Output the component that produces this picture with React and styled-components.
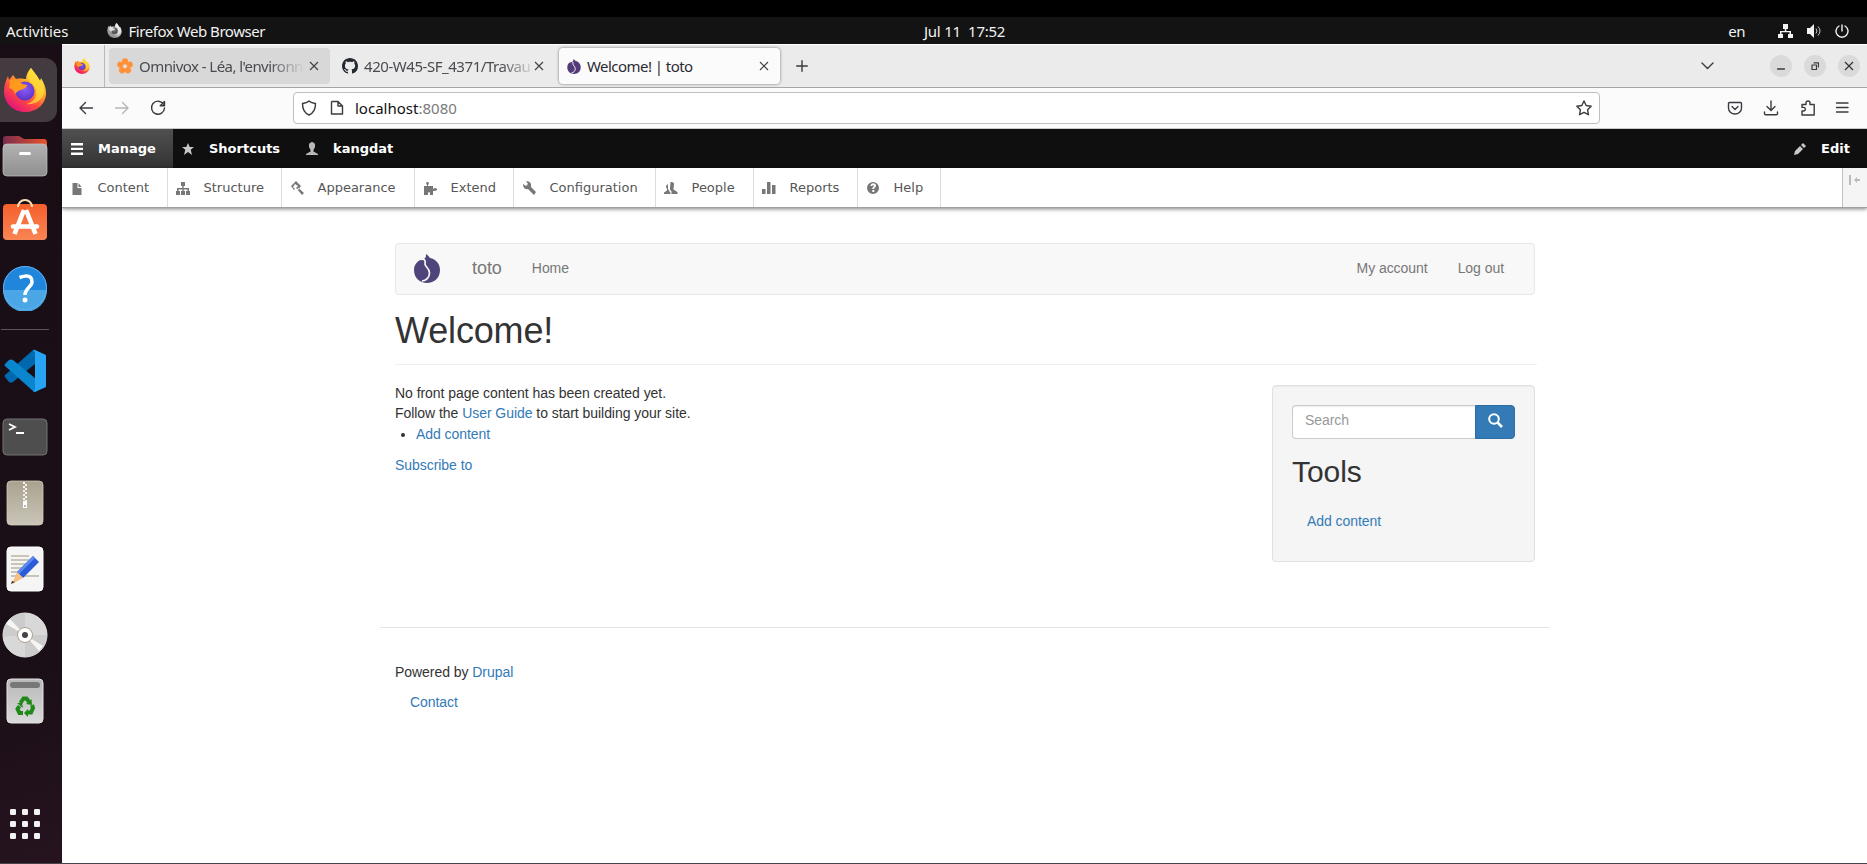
import React from "react";
import styled, { createGlobalStyle } from "styled-components";

const Global = createGlobalStyle`
  *{box-sizing:border-box}
  html,body{margin:0;padding:0;background:#000}
  body{width:1867px;height:864px;overflow:hidden;font-family:"Liberation Sans",Arial,sans-serif}
  svg{display:block;flex:none}
`;
const ui = `"Noto Sans","Open Sans",sans-serif`;

const Screen = styled.div`
  width:1867px;height:864px;display:flex;flex-direction:column;background:#fff;overflow:hidden;
  border-top:17px solid #000;border-bottom:1px solid #45454d;
`;
const TopBar = styled.header`
  height:27px;flex:none;background:#131313;color:#f2f2f2;display:grid;
  grid-template-columns:918px auto 1fr;align-items:center;padding:0 18px 0 6px;
`;
const TopGroup = styled.div`
  display:flex;align-items:center;justify-content:${p => (p.$end ? "flex-end" : "flex-start")};
`;
const Label = styled.span`
  font-family:${ui};font-size:${p => p.$size || 15}px;letter-spacing:${p => p.$ls || 0}px;
  line-height:20px;white-space:pre;margin-left:${p => p.$ml || 0}px;color:${p => p.$color || "inherit"};
`;
const Gap = styled.span`flex:none;width:${p => p.$w}px;`;
const Spacer = styled.span`flex:1;`;
const Desktop = styled.div`flex:1;display:flex;min-height:0;`;
const Dock = styled.aside`
  width:62px;flex:none;background:linear-gradient(160deg,#190e15 0%,#1a0f17 75%,#26131f 100%);
  display:flex;flex-direction:column;align-items:flex-start;padding-top:14px;
`;
const DockItem = styled.div`
  width:57px;height:${p => p.$h || 66}px;flex:none;display:flex;align-items:center;padding-left:${p => p.$pl ?? 2}px;
  margin-top:${p => p.$mt || 0}px;
  border-radius:0 12px 12px 0;background:${p => (p.$active ? "#443b41" : "transparent")};
`;
const DockLine = styled.div`width:48px;height:1px;background:#5b5358;margin:3px 0 8px 1px;flex:none;`;
const Browser = styled.section`flex:1;display:flex;flex-direction:column;min-width:0;background:#fff;`;
const TabStrip = styled.div`
  height:44px;flex:none;background:#ebebeb;border-top:1px solid #fff;border-bottom:1px solid #a5a5a7;
  display:flex;align-items:center;padding-right:7px;
`;
const Pinned = styled.div`
  width:43px;flex:none;height:100%;border-right:1px solid #b8b8b8;display:flex;align-items:center;padding-left:12px;margin-right:4px;
`;
const Tab = styled.div`
  width:221px;flex:none;height:36px;border-radius:4px;display:flex;align-items:center;padding:0 11px 0 8px;margin-right:4px;
  background:${p => (p.$kind === "active" ? "#fbfbfb" : p.$kind === "hover" ? "#d8d8d8" : "transparent")};
  box-shadow:${p => (p.$kind === "active" ? "0 0 3px rgba(0,0,0,.5)" : "none")};
  color:${p => (p.$kind === "active" ? "#2b2a33" : "#4a4a4f")};
`;
const TabTitle = styled.div`
  flex:1;min-width:0;margin:0 0 0 6px;font-family:${ui};font-size:15px;
  letter-spacing:${p => p.$ls || 0}px;line-height:20px;white-space:nowrap;
  ${p => p.$fade && `mask-image:linear-gradient(90deg,#000 ${p.$fade - 32}px,transparent ${p.$fade + 3}px);`}
`;
const WindowButtons = styled.div`display:flex;gap:12px;`;
const WindowButton = styled.span`
  width:22px;height:22px;border-radius:50%;background:#dadada;display:flex;align-items:center;justify-content:center;
`;
const NavBar = styled.div`
  height:41px;flex:none;background:#fbfbfb;border-bottom:1px solid #cacaca;display:flex;align-items:center;padding-left:16px;
`;
const UrlBar = styled.div`
  width:1307px;flex:none;height:32px;border:1px solid #bfbfc2;border-radius:4px;background:#fff;display:flex;align-items:center;
  padding:0 7px;margin-left:127px;
`;
const AdminBar = styled.nav`
  height:39px;flex:none;background:#0f0f0f;color:#fff;display:flex;font:bold 13px/38px "DejaVu Sans",sans-serif;
`;
const AdminTab = styled.div`
  display:flex;align-items:center;padding-left:${p => p.$pl || 9}px;width:${p => p.$w}px;
  background:${p => (p.$on ? "linear-gradient(#505050,#333)" : "transparent")};
  svg{margin-right:15px}
`;
const Tray = styled.nav`
  height:40px;flex:none;display:flex;border-bottom:1px solid #a0a0a0;box-shadow:0 1px 4px rgba(0,0,0,.5);background:#fff;
  font:13px/38px "DejaVu Sans",sans-serif;color:#565656;
`;
const TrayItem = styled.div`
  width:${p => p.$w}px;border-right:1px solid #ddd;display:flex;align-items:center;padding-left:8px;
  svg{margin-right:13.5px}
`;
const TrayToggle = styled.div`
  width:25px;margin-left:auto;background:#f5f5f5;border-left:1px solid #c2c2c2;padding:7px 0 0 6px;
`;
const Page = styled.main`width:1170px;margin:35px 0 0 318px;color:#333;font-size:14px;line-height:20px;letter-spacing:-.05px;`;
const SiteNav = styled.div`
  height:52px;margin:0 15px;background:#f8f8f8;border:1px solid #e7e7e7;border-radius:4px;display:flex;align-items:center;
  padding:0 30px 2px 18px;color:#777;
`;
const Brand = styled.span`font-size:18px;margin:0 30px 0 32px;`;
const NavLinks = styled.div`display:flex;gap:30px;margin-left:auto;`;
const Title = styled.h1`
  margin:16px 13px 20px 15px;height:54px;border-bottom:1px solid #eee;font-size:36px;font-weight:400;line-height:40px;letter-spacing:-.15px;
`;
const Columns = styled.div`display:flex;justify-content:space-between;padding:0 15px;height:242px;`;
const Body = styled.div`margin-top:-2px;`;
const Link = styled.a`color:#337ab7;`;
const List = styled.ul`margin:0 0 10px;padding-left:21px;line-height:22px;`;
const Line = styled.p`margin:0;`;
const Well = styled.aside`
  width:263px;height:177px;background:#f5f5f5;border:1px solid #e1e1e1;border-radius:4px;padding:19px;
  box-shadow:inset 0 1px 1px rgba(0,0,0,.05);
`;
const SearchRow = styled.div`display:flex;height:34px;`;
const SearchField = styled.div`
  flex:1;border:1px solid #ccc;border-right:0;border-radius:4px 0 0 4px;background:#fff;color:#999;padding:4px 12px;
  box-shadow:inset 0 1px 1px rgba(0,0,0,.075);
`;
const SearchButton = styled.div`
  width:40px;background:#337ab7;border:1px solid #2e6da4;border-radius:0 4px 4px 0;display:flex;justify-content:center;padding-top:7px;
`;
const ToolsTitle = styled.h2`margin:16px 0 23px;font-size:30px;font-weight:400;line-height:33px;`;
const Indent = styled.div`padding-left:15px;`;
const Footer = styled.footer`border-top:1px solid #e5e5e5;padding:34px 15px 0;`;
const FooterLink = styled.div`padding:10px 15px;`;

function Firefox({ size, gray, id }) {
  return (
    <svg width={size} height={size} viewBox="0 0 44 44">
      <defs>
        <linearGradient id={id + "a"} x1=".85" y1=".1" x2=".25" y2=".95">
          <stop offset="0" stopColor={gray ? "#eee" : "#fff44f"} /><stop offset=".35" stopColor={gray ? "#ccc" : "#ffa726"} />
          <stop offset=".65" stopColor={gray ? "#aaa" : "#ff4a40"} /><stop offset="1" stopColor={gray ? "#888" : "#e3157a"} />
        </linearGradient>
        <radialGradient id={id + "b"} cx=".5" cy=".4" r=".6">
          <stop offset="0" stopColor={gray ? "#777" : "#8a5cf6"} /><stop offset="1" stopColor={gray ? "#444" : "#5b35c5"} />
        </radialGradient>
      </defs>
      <path fill={`url(#${id}a)`} d="M28 0c2 3 4 5 6 8 1 2 2 3 3 5l1-3c3 5 5 10 5 15 0 11-9 19-21 19S1 35 1 23C1 17 3 12 5 8l1 4 4-5 3 4c4-1 8 0 10 0 0-4 2-8 5-11z" />
      <circle cx="22" cy="23" r="9.500" fill={`url(#${id}b)`} />
      <path fill={gray ? "#ddd" : "#ff9a1f"} d="M7 12c5-2 10 1 12 4l5 1c0 3-4 4-6 5-2 0-4 2-6 4-1-4-3-5-6-6 1-3 1-5 1-8z" />
      <path fill={gray ? "#eee" : "#ffdc3a"} d="M28 0c-4 5-4 10-1 14 4 3 7 7 6 13-1 5-5 8-10 9 9 1 17-4 18-12 0-8-4-11-7-16-2-3-4-5-6-8z" opacity=".75" />
    </svg>
  );
}
const Files = () => (
  <svg width="46" height="42" viewBox="0 0 46 42">
    <defs><linearGradient id="fo"><stop offset="0" stopColor="#7a2d4f" /><stop offset="1" stopColor="#e9542a" /></linearGradient>
      <linearGradient id="fg" x2="0" y2="1"><stop offset="0" stopColor="#b2b2b2" /><stop offset="1" stopColor="#8f8f8f" /></linearGradient></defs>
    <path fill="url(#fo)" d="M1 16V4q0-3 3-3h13l5 3h20q3 0 3 4v8z" />
    <rect x="1" y="9" width="44" height="32" rx="4" fill="url(#fg)" stroke="#c5c5c5" strokeWidth=".7" />
    <rect x="17" y="17" width="12" height="3" rx="1.500" fill="#fff" />
  </svg>
);
const Software = () => (
  <svg width="46" height="44" viewBox="0 0 46 44">
    <defs><linearGradient id="so" x2="0" y2="1"><stop offset="0" stopColor="#f4602b" /><stop offset="1" stopColor="#f98555" /></linearGradient></defs>
    <rect x="1" y="6" width="44" height="36" rx="4" fill="url(#so)" />
    <path d="M16 9a7 7 0 0 1 14 0" fill="none" stroke="#fbe2b5" strokeWidth="2" />
    <path d="M22 12 12.500 36M24 12l9.500 24" stroke="#fff" strokeWidth="4.600" />
    <path d="M11 28.500h24" stroke="#fff" strokeWidth="4.500" strokeLinecap="round" />
  </svg>
);
const Help = () => (
  <svg width="46" height="46" viewBox="0 0 46 46">
    <circle cx="23" cy="23" r="22" fill="#1f86dc" /><path d="M1 25a22 22 0 0 0 44 0z" fill="#4aa6e4" />
    <circle cx="23" cy="23" r="21.500" fill="none" stroke="#5fb1ef" />
    <path d="M17.500 12.500Q30 8 30 17c0 5-7 6-7 13" fill="none" stroke="#fff" strokeWidth="3.500" /><circle cx="23" cy="35" r="2.500" fill="#fff" />
  </svg>
);
const Code = () => (
  <svg width="44" height="44" viewBox="0 0 44 44">
    <path d="m2 28 4 5q2 1 4 0L33 14V1q-2-1-3 0L2 26q-1 1 0 2z" fill="#0069ad" />
    <path d="m2 15 4-4q2-1 4 0l23 19v12q-2 1-3 0L2 17q-1-1 0-2z" fill="#0a86cf" />
    <path d="M32 1 43 6v32L32 43q-1 0-2-1 2 0 2-2V4q0-2-2-2z" fill="#27a5f2" />
  </svg>
);
const Terminal = () => (
  <svg width="46" height="38" viewBox="0 0 46 38">
    <rect x="1" y="1" width="44" height="36" rx="4" fill="#4e4e4e" stroke="#727272" />
    <path d="m7 6 6 3-6 3M14 15h8" stroke="#fff" strokeWidth="1.800" fill="none" />
  </svg>
);
const Archive = () => (
  <svg width="38" height="46" viewBox="0 0 38 46">
    <defs><linearGradient id="ar" x2="0" y2="1"><stop offset="0" stopColor="#aaa28f" /><stop offset="1" stopColor="#c9c5b7" /></linearGradient></defs>
    <rect x="1" y="1" width="36" height="44" rx="4" fill="url(#ar)" stroke="#cfcbbf" strokeWidth=".8" />
    <path d="M18 2v20" stroke="#f5f3ed" strokeWidth="2" strokeDasharray="2 2" /><path d="M20 4v18" stroke="#f5f3ed" strokeWidth="2" strokeDasharray="2 2" />
    <path fill="#fff" fillRule="evenodd" d="M17 21h4v7h-4zM18 25v2h2v-2z" />
  </svg>
);
const Editor = () => (
  <svg width="38" height="46" viewBox="0 0 38 46">
    <rect x="1" y="1" width="36" height="44" rx="4" fill="#f5f5f5" stroke="#fff" />
    <path d="M5 10h18M5 14h18M5 18h17M5 22h13M5 26h8M5 30h28" stroke="#c8c4b7" strokeWidth="2" />
    <path d="m27 10 6 6-16 16-6-6z" fill="#2b5bd8" /><path d="m27 10 2 2-16 16-2-2z" fill="#5b8af0" /><path d="m11 26 6 6-11 6z" fill="#f6be83" /><path d="m6 35 3 1-4 2z" fill="#333" />
  </svg>
);
const Disc = () => (
  <svg width="46" height="46" viewBox="0 0 46 46">
    <circle cx="23" cy="23" r="22" fill="#ccc" stroke="#ddd" /><path d="M23 23V1a22 22 0 0 1 22 22zM23 23v22A22 22 0 0 1 1 25z" fill="#d8d8d8" />
    <path d="M23 23 4 12l4-5zM23 23l18 11-4 5z" fill="#f6f6f4" />
    <circle cx="23" cy="23" r="7.500" fill="#fff" stroke="#aaa08a" /><circle cx="23" cy="23" r="3" fill="#444" />
  </svg>
);
const Trash = () => (
  <svg width="38" height="46" viewBox="0 0 38 46">
    <defs><linearGradient id="tr" x2="0" y2="1"><stop offset="0" stopColor="#b8b8b8" /><stop offset="1" stopColor="#dadada" /></linearGradient></defs>
    <rect x="1" y="1" width="36" height="44" rx="4" fill="url(#tr)" stroke="#e4e4e4" /><rect x="4" y="4" width="30" height="6" rx="3" fill="#777" />
    <g fill="none" stroke="#20891a" strokeWidth="4">
      <path d="m14.500 25 3-4.500h3l3 4" /><path d="m26 27 1 3-2 4.500h-4" /><path d="M17 35h-3.500l-2-4 2-3" />
    </g>
    <path fill="#20891a" d="m25.500 21 .500 6-6-1zM22 31v8l-4-4zM11 25l5 0 1 5z" />
  </svg>
);
const AppsGrid = () => (
  <svg width="30" height="30" viewBox="0 0 30 30" fill="#f2f2f2">
    {[0, 12, 24].map(y => [0, 12, 24].map(x => <rect key={x + "-" + y} x={x} y={y} width="6" height="6" rx="1.300" />))}
  </svg>
);
const Flower = () => (
  <svg width="16" height="16" viewBox="0 0 16 16"><g fill="#ff9238">
    {[0, 72, 144, 216, 288].map(a => <circle key={a} cx="8" cy="3.300" r="3.100" transform={`rotate(${a} 8 8.300)`} />)}<circle cx="8" cy="8.300" r="4" />
  </g><circle cx="8" cy="8.300" r="2.100" fill="#e4dcd6" /></svg>
);
const Github = () => (
  <svg width="16" height="16" viewBox="0 0 16 16"><path fill="#24292f" d="M8 0C3.580 0 0 3.580 0 8c0 3.540 2.290 6.530 5.470 7.590.4.070.55-.17.55-.38 0-.19-.01-.82-.01-1.490-2.010.37-2.530-.49-2.690-.94-.09-.23-.48-.94-.82-1.130-.28-.15-.68-.52-.01-.53.63-.01 1.080.58 1.230.82.72 1.210 1.870.87 2.330.66.07-.52.28-.87.51-1.070-1.780-.2-3.640-.89-3.640-3.950 0-.87.31-1.590.82-2.150-.08-.2-.36-1.020.08-2.120 0 0 .67-.21 2.200.82.64-.18 1.320-.27 2-.27s1.360.09 2 .27c1.530-1.040 2.200-.82 2.200-.82.44 1.100.16 1.920.08 2.120.51.56.82 1.270.82 2.150 0 3.070-1.870 3.750-3.650 3.950.29.25.54.73.54 1.480 0 1.070-.01 1.930-.01 2.200 0 .21.15.46.55.38A8.010 8.010 0 0 0 16 8c0-4.420-3.580-8-8-8z" /></svg>
);
const Fig = ({ w, h, color, line }) => (
  <svg width={w} height={h} viewBox="0 0 26 29">
    <path fill={color} d="M10 5c2-1 2-3 2-5 2 1 3 3 4 4 6 1 10 6 10 12 0 8-6 13-13 13S0 24 0 16C0 10 4 6 10 5z" />
    <path fill="none" stroke={line} strokeWidth="1.700" d="M6.500 5.300c3.500-.8 5.500 1 4.500 4.200-.8 3 4.500 4 4.500 9.500 0 4-3 7.500-7.500 8" />
  </svg>
);
const Cross = ({ c = "#444", s = 10 }) => <svg width={s} height={s} viewBox="0 0 10 10"><path d="m1 1 8 8M9 1 1 9" stroke={c} strokeWidth="1.200" /></svg>;
const Stroke = ({ d, w = 16, h = 16, c = "#3a3a40", sw = 1.4, fill = "none" }) => (
  <svg width={w} height={h} viewBox={`0 0 ${w} ${h}`}><path d={d} fill={fill} stroke={c} strokeWidth={sw} strokeLinecap="round" strokeLinejoin="round" /></svg>
);
const Solid = ({ d, c = "#777", w = 14, h = 14 }) => <svg width={w} height={h} viewBox={`0 0 ${w} ${h}`}><path d={d} fill={c} fillRule="evenodd" /></svg>;

const trayItems = [
  ["Content", 106, "M2.500 2h5v5h4v7h-9zM8.500 2l3 4h-3z"],
  ["Structure", 114, "M5 1h4v4H7.700v2H13v3h1v4h-4v-4h1.500V8.500H7.700V10H9v4H5v-4h1.300V8.500H2.500V10H4v4H0v-4h1V7h5.300V5H5z"],
  ["Appearance", 133, "M1 5 6 0l5 5-3 4-2-2 2-2-3-2-2 3 2 2-1 1zM8.500 7l5.500 5-2 2-5-6z"],
  ["Extend", 99, "M1 5h3V4Q2 1 4.500 1T5 4v1h5v3q3-2 4 0t-4 2v4H7v-2Q6 10 5 12v2H1z"],
  ["Configuration", 142, "M1 3l3 2 2-2-2-3q6 0 5 6l5 5-2 3-6-6Q1 9 1 3z"],
  ["People", 98, "M6.500 1q4-.5 3.500 3L9.500 7v1.500l4 2.500v2H7.500v-2.500L6 8.500V7zM4 3v5l1.500 2v1l1 .5V13H0v-1.500l3-2V8L2 6q0-2 2-3z"],
  ["Reports", 104, "M0 8h3.500v5H0zM5 1h3.500v12H5zM10 4h3.500v9H10z"],
  ["Help", 83, "M7 1a6 6 0 1 1 0 12A6 6 0 0 1 7 1zM4.300 5h2q0-1 1-1t0 2l-1 1v1h2V7q3-2 1-4-4-2-5 2zM6.300 9v2h2V9z"],
];

export default function App() {
  return (
    <Screen>
      <Global />
      <TopBar>
        <TopGroup><Label>Activities</Label><Gap $w={38} /><Firefox size={15} gray id="top" /><Label $ml={7} $ls={-0.45}>Firefox Web Browser</Label></TopGroup>
        <Label $ls={-0.25}>Jul 11  17:52</Label>
        <TopGroup $end>
          <Label $ls={-0.5}>en</Label><Gap $w={33} />
          <Solid w={15} h={14} c="#f2f2f2" d="M5 0h5v5H8.300v2H13v3h2v4h-5v-4h1.500V8.300h-8V10H5v4H0v-4h2V7h4.800V5H5z" /><Gap $w={14} />
          <svg width="15" height="14" viewBox="0 0 15 14"><path fill="#f2f2f2" d="M0 4h3l4-4v14l-4-4H0z" /><path d="M9 4.500q2 2.500 0 5M11 2.500q4 4.500 0 9" stroke="#ccc" fill="none" /></svg><Gap $w={13} />
          <Stroke w={14} h={14} c="#f2f2f2" sw={1.4} d="M4 2a6 6 0 1 0 6 0M7 1v6" />
        </TopGroup>
      </TopBar>
      <Desktop>
        <Dock>
          <DockItem $active $h={64} $pl={3}><Firefox size={44} id="dock" /></DockItem>
          <DockItem $h={68}><Files /></DockItem>
          <DockItem $h={60}><Software /></DockItem>
          <DockItem $h={76}><Help /></DockItem>
          <DockLine />
          <DockItem $pl={3}><Code /></DockItem>
          <DockItem><Terminal /></DockItem>
          <DockItem $pl={6}><Archive /></DockItem>
          <DockItem $pl={6}><Editor /></DockItem>
          <DockItem><Disc /></DockItem>
          <DockItem $pl={6}><Trash /></DockItem>
          <DockItem $h={30} $mt={75} $pl={10}><AppsGrid /></DockItem>
        </Dock>
        <Browser>
          <TabStrip>
            <Pinned><Firefox size={16} id="pin" /></Pinned>
            <Tab $kind="hover"><Flower /><TabTitle $fade={162} $ls={-0.55}>Omnivox - Léa, l'environn</TabTitle><Cross /></Tab>
            <Tab><Github /><TabTitle $fade={169} $ls={-0.45}>420-W45-SF_4371/Travau</TabTitle><Cross /></Tab>
            <Tab $kind="active"><Fig w={14} h={15} color="#523b78" line="#fff" /><TabTitle $ls={-0.55}>Welcome! | toto</TabTitle><Cross /></Tab>
            <Gap $w={12} /><Stroke w={12} h={12} d="M6 .7v10.600M.7 6h10.600" />
            <Spacer /><Stroke w={13} h={8} d="m1 1 5.500 5.500L12 1" /><Gap $w={56} />
            <WindowButtons>
              <WindowButton><Stroke w={8} h={8} d="M.5 7h7" /></WindowButton>
              <WindowButton><Stroke w={8} h={8} sw={1.2} d="M1 3h4.500v4.500H1zM3 .8h4.500V5" /></WindowButton>
              <WindowButton><Cross c="#333" /></WindowButton>
            </WindowButtons>
          </TabStrip>
          <NavBar>
            <Stroke d="M14.500 8H2m5.500-5.500L2 8l5.500 5.500" /><Gap $w={20} /><Stroke c="#b5b5b8" d="M1.500 8H14M8.500 2.500 14 8l-5.500 5.500" /><Gap $w={20} />
            <Stroke d="M13.500 4.200A6.500 6.500 0 1 0 14.500 8M14.500 1.500v4.300h-4.300z" />
            <UrlBar>
              <Stroke d="M8 1c2 2 4 2 6.500 2.500C14.500 9 13 13 8 15 3 13 1.500 9 1.500 3.500 4 3 6 3 8 1z" /><Gap $w={13} />
              <Stroke w={14} h={16} d="M1.500 2v12h11V6L8 1.500H2zM8 2v4h4.500" />
              <Label $ml={11} $color="#111">localhost</Label><Label $color="#7a7a7a" $ls={0.05}>:8080</Label>
              <Spacer /><Stroke d="m8 1 2.200 4.500 5 .7-3.600 3.500.8 5L8 12.400l-4.400 2.300.8-5L.8 6.200l5-.7z" />
            </UrlBar>
            <Gap $w={127} />
            <Stroke d="M2.500 2.500h11q1 0 1 1V8a6.500 6 0 0 1-13 0V3.500q0-1 1-1M5 6.500 8 9.500l3-3" /><Gap $w={20} />
            <Stroke d="M8 1v9M4 6.500 8 10.500l4-4M1.500 12v1.500q0 1.200 1.200 1.200h10.600q1.200 0 1.200-1.200V12" /><Gap $w={21} />
            <Stroke d="M2 15v-4h1.500a1.800 1.800 0 0 0 0-3.600H2V4.500h4V3a2 2 0 0 1 4 0v1.500h4.200V15z" /><Gap $w={19} />
            <Stroke w={14} d="M1.500 3h11.500M1.500 7.500h11.500M1.500 12h11.500" />
          </NavBar>
          <AdminBar>
            <AdminTab $on $w={111}><Solid w={12} h={12} c="#fff" d="M0 0h12v2.400H0zM0 4.700h12v2.400H0zM0 9.500h12V12H0z" />Manage</AdminTab>
            <AdminTab $w={124}><Solid w={12} h={12} c="#c8c8c8" d="m6 0 1.700 4H12L8.700 6.800 10 12 6 9 2 12l1.300-5.200L0 4h4.300z" />Shortcuts</AdminTab>
            <AdminTab $w={200}><Solid w={12} h={13} c="#b8b8b8" d="M3 2q3-4 6 0v3L7.500 8v1.500L12 12v1H0v-1l4.500-2.500V8L3 5z" />kangdat</AdminTab>
            <Spacer />
            <AdminTab $w={81} $pl={8}><Solid w={12} h={12} c="#c8c8c8" d="m9 0 3 3-2 2-3-3zM6 3l3 3-5 5-4 1 1-4z" />Edit</AdminTab>
          </AdminBar>
          <Tray>
            {trayItems.map(([name, w, d]) => <TrayItem key={name} $w={w}><Solid d={d} />{name}</TrayItem>)}
            <TrayToggle><Solid w={12} h={10} c="#bbb" d="M0 0h2v10H0zM5 5l3-3v2h3v2H8v2z" /></TrayToggle>
          </Tray>
          <Page>
            <SiteNav>
              <Fig w={26} h={29} color="#50457b" line="#f8f8f8" /><Brand>toto</Brand><span>Home</span>
              <NavLinks><span>My account</span><span>Log out</span></NavLinks>
            </SiteNav>
            <Title>Welcome!</Title>
            <Columns>
              <Body>
                <Line>No front page content has been created yet.</Line>
                <Line>Follow the <Link>User Guide</Link> to start building your site.</Line>
                <List><li><Link>Add content</Link></li></List>
                <Line><Link>Subscribe to</Link></Line>
              </Body>
              <Well>
                <SearchRow>
                  <SearchField>Search</SearchField>
                  <SearchButton><svg width="15" height="15" viewBox="0 0 15 15"><circle cx="6" cy="6" r="4.800" fill="none" stroke="#fff" strokeWidth="2" /><path d="m9.500 9.500 4.500 4.500" stroke="#fff" strokeWidth="2.500" /></svg></SearchButton>
                </SearchRow>
                <ToolsTitle>Tools</ToolsTitle>
                <Indent><Link>Add content</Link></Indent>
              </Well>
            </Columns>
            <Footer>
              <Line>Powered by <Link>Drupal</Link></Line>
              <FooterLink><Link>Contact</Link></FooterLink>
            </Footer>
          </Page>
        </Browser>
      </Desktop>
    </Screen>
  );
}
